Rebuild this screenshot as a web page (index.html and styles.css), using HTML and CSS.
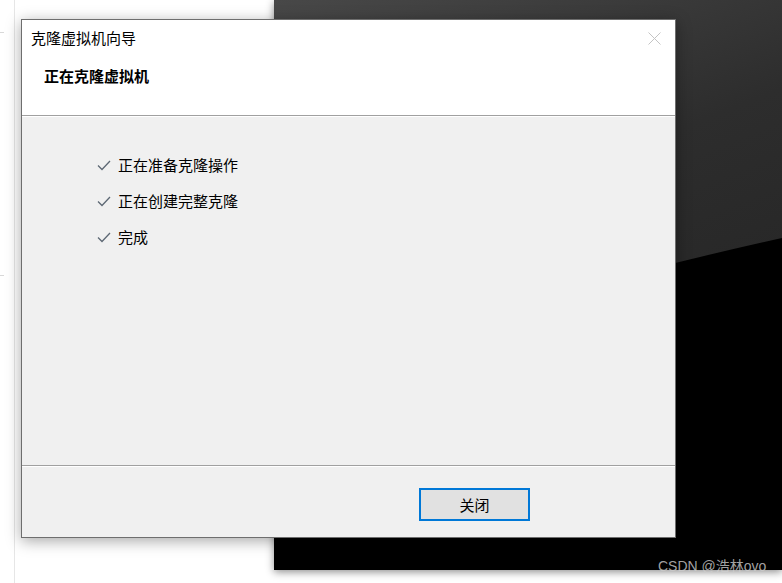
FILE: index.html
```html
<!DOCTYPE html>
<html lang="zh-CN">
<head>
<meta charset="utf-8">
<title>克隆虚拟机向导</title>
<link rel="stylesheet" href="styles.css">
</head>
<body>
<div class="page">
  <div class="rail">
    <span class="tick tick-a"></span>
    <span class="tick tick-b"></span>
  </div>
  <div class="desktop">
    <svg class="desk-art" viewBox="0 0 508 570" preserveAspectRatio="none" aria-hidden="true">
      <defs>
        <linearGradient id="dg" x1="0" y1="0" x2="0.35" y2="1">
          <stop offset="0" stop-color="#484848"/>
          <stop offset="0.45" stop-color="#2d2d2d"/>
          <stop offset="1" stop-color="#222"/>
        </linearGradient>
      </defs>
      <rect x="0" y="0" width="508" height="570" fill="url(#dg)"/>
      <path d="M0,385 Q220,302 508,238 L508,570 L0,570 Z" fill="#000"/>
    </svg>
    <div class="watermark">CSDN @浩林ovo</div>
  </div>

  <div class="dialog">
    <div class="dialog-top">
      <div class="titlebar">
        <span class="title">克隆虚拟机向导</span>
        <svg class="close" width="13" height="13" viewBox="0 0 13 13" aria-hidden="true">
          <path d="M0.5,0.5 L12.5,12.5 M12.5,0.5 L0.5,12.5" stroke="#c4c4c4" stroke-width="1" fill="none"/>
        </svg>
      </div>
      <div class="heading">正在克隆虚拟机</div>
    </div>
    <div class="sep"></div>
    <div class="dialog-body">
      <div class="step">
        <svg class="check" width="14" height="11" viewBox="0 0 14 11" aria-hidden="true"><path d="M1,5.5 L5,9.5 L13,1" stroke="#5d6874" stroke-width="1.3" fill="none"/></svg>
        <span>正在准备克隆操作</span>
      </div>
      <div class="step">
        <svg class="check" width="14" height="11" viewBox="0 0 14 11" aria-hidden="true"><path d="M1,5.5 L5,9.5 L13,1" stroke="#5d6874" stroke-width="1.3" fill="none"/></svg>
        <span>正在创建完整克隆</span>
      </div>
      <div class="step">
        <svg class="check" width="14" height="11" viewBox="0 0 14 11" aria-hidden="true"><path d="M1,5.5 L5,9.5 L13,1" stroke="#5d6874" stroke-width="1.3" fill="none"/></svg>
        <span>完成</span>
      </div>
    </div>
    <div class="sep"></div>
    <div class="dialog-footer">
      <button class="btn" type="button">关闭</button>
    </div>
  </div>
</div>
</body>
</html>
```
FILE: styles.css
```css
* { box-sizing: border-box; }
html, body {
  margin: 0;
  padding: 0;
  width: 782px;
  height: 583px;
  overflow: hidden;
  background: #fff;
  font-family: "Noto Sans CJK SC", "Liberation Sans", sans-serif;
}
.page {
  position: relative;
  width: 782px;
  height: 583px;
}
.rail {
  position: absolute;
  left: 0;
  top: 0;
  width: 15px;
  height: 583px;
  border-right: 1px solid #e6e6e6;
}
.tick {
  position: absolute;
  left: 0;
  width: 4px;
  height: 1px;
  background: #d8d8d8;
}
.tick-a { top: 32px; }
.tick-b { top: 275px; }

.desktop {
  position: absolute;
  left: 274px;
  top: 0;
  width: 508px;
  height: 570px;
  background: #000;
  box-shadow: 0 2px 8px rgba(0,0,0,0.45);
}
.desk-art {
  position: absolute;
  left: 0;
  top: 0;
  width: 508px;
  height: 570px;
  display: block;
}
.watermark {
  position: absolute;
  left: 384px;
  top: 556px;
  font-family: "Liberation Sans", "Noto Sans CJK SC", sans-serif;
  font-size: 14px;
  line-height: 20px;
  color: rgba(205,205,205,0.8);
  white-space: nowrap;
}

.dialog {
  position: absolute;
  left: 21px;
  top: 19px;
  width: 655px;
  height: 519px;
  border: 1px solid #6e6e6e;
  background: #f0f0f0;
  box-shadow: 0 3px 14px rgba(0,0,0,0.35);
  display: flex;
  flex-direction: column;
}
.dialog-top {
  background: #fff;
  height: 95px;
  padding-top: 8px;
}
.titlebar {
  display: flex;
  align-items: center;
  justify-content: space-between;
  height: 20px;
  padding-left: 9px;
  padding-right: 14px;
}
.title {
  font-size: 15px;
  line-height: 20px;
  color: #000;
}
.close {
  display: block;
  margin-top: 0;
}
.heading {
  margin-top: 18px;
  padding-left: 22px;
  font-size: 15px;
  line-height: 20px;
  font-weight: bold;
  color: #000;
}
.sep {
  height: 2px;
  border-top: 1px solid #a0a0a0;
  border-bottom: 1px solid #fff;
}
.dialog-body {
  height: 348px;
  padding-top: 38px;
  padding-left: 75px;
  display: flex;
  flex-direction: column;
  gap: 16px;
}
.step {
  display: flex;
  align-items: center;
  gap: 7px;
  height: 20px;
  font-size: 15px;
  line-height: 20px;
  color: #000;
}
.check { display: block; flex: none; }
.dialog-footer {
  flex: 1;
  padding-top: 21px;
  padding-left: 397px;
}
.btn {
  width: 111px;
  height: 33px;
  border: 2px solid #0078d7;
  background: #e1e1e1;
  font-family: "Noto Sans CJK SC", sans-serif;
  font-size: 15px;
  line-height: 20px;
  color: #000;
  padding: 0;
  margin: 0;
}
```
